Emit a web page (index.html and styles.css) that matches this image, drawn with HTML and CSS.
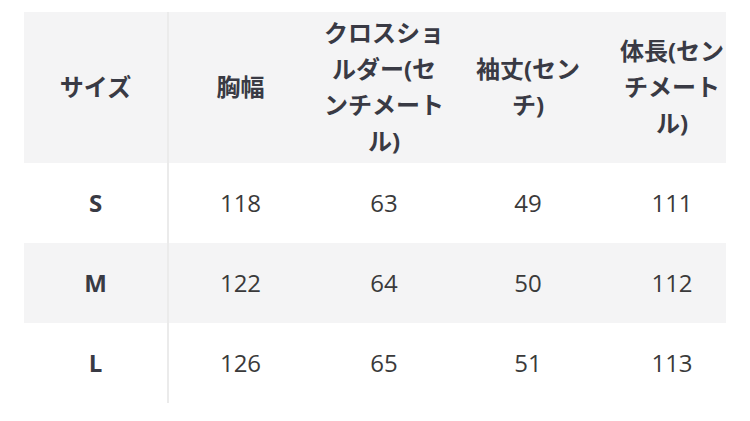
FILE: index.html
```html
<!DOCTYPE html>
<html lang="ja">
<head>
<meta charset="utf-8">
<link rel="stylesheet" href="styles.css">
</head>
<body>
<div class="page">
  <div class="table-wrap">
    <table class="size-table">
      <colgroup>
        <col class="c1"><col class="c"><col class="c"><col class="c"><col class="c">
      </colgroup>
      <thead>
        <tr class="shade">
          <th class="first">サイズ</th>
          <th>胸幅</th>
          <th>クロスショルダー(センチメートル)</th>
          <th>袖丈(センチ)</th>
          <th>体長(センチメートル)</th>
        </tr>
      </thead>
      <tbody>
        <tr>
          <td class="first">S</td><td>118</td><td>63</td><td>49</td><td>111</td>
        </tr>
        <tr class="shade">
          <td class="first">M</td><td>122</td><td>64</td><td>50</td><td>112</td>
        </tr>
        <tr>
          <td class="first">L</td><td>126</td><td>65</td><td>51</td><td>113</td>
        </tr>
      </tbody>
    </table>
  </div>
</div>
</body>
</html>
```
FILE: styles.css
```css
html, body {
  margin: 0;
  padding: 0;
  background: #ffffff;
}
.page {
  padding: 12px 24px 0 24px;
  font-family: "Open Sans", "Noto Sans CJK JP", sans-serif;
  color: #36363d;
}
.table-wrap {
  width: 702px;
  overflow: hidden;
}
.size-table {
  border-collapse: collapse;
  table-layout: fixed;
  width: 720px;
}
.c1 { width: 144px; }
.c { width: 144px; }
.size-table th,
.size-table td {
  text-align: center;
  vertical-align: middle;
  font-size: 24px;
  line-height: 36px;
  padding: 0 10px;
}
.size-table th {
  font-weight: 700;
  height: 151px;
  padding: 3px 10px 4px;
  box-sizing: border-box;
  color: #393a44;
}
.size-table td {
  height: 80px;
  font-weight: 400;
  color: #3a3a3a;
}
.size-table td.first {
  font-weight: 700;
  color: #393a44;
}
.size-table .first {
  border-right: 2px solid #ebebeb;
}
.shade {
  background: #f4f4f5;
}
```
